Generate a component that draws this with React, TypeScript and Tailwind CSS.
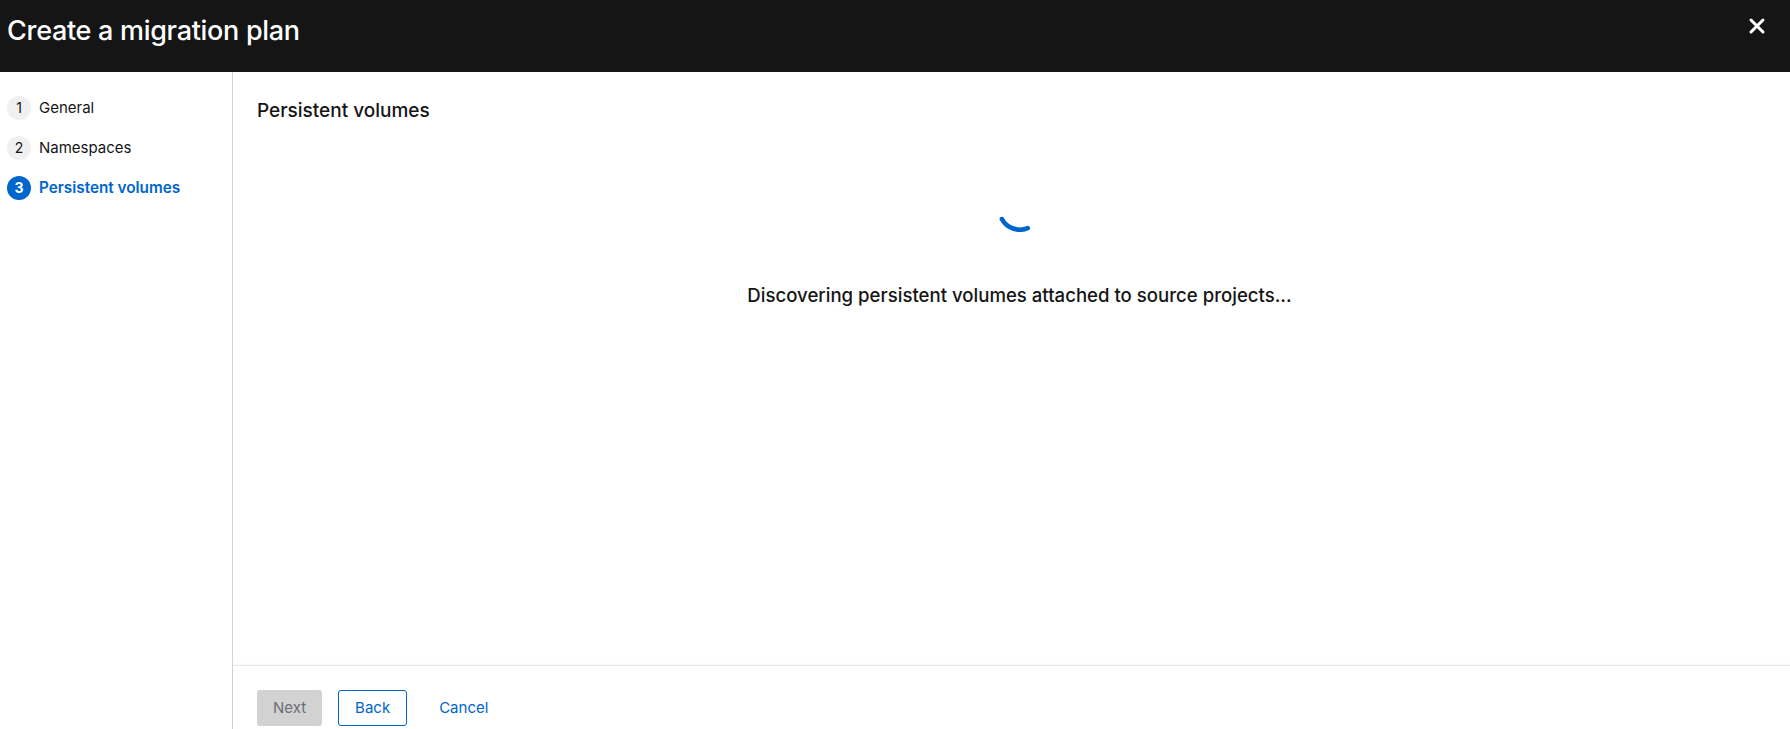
import { X } from 'lucide-react'

const steps = [
  { id: 1, name: 'General' },
  { id: 2, name: 'Namespaces' },
  { id: 3, name: 'Persistent volumes' },
]

const activeStep = 3

// Spinner captured mid-rotation: just a short arc along the bottom
function Spinner() {
  return (
    <svg width="46" height="46" viewBox="0 0 46 46" fill="none">
      <path
        d="M 30.75 42.19 A 20.7 20.7 0 0 1 4.9 33.04"
        stroke="#0066cc"
        strokeWidth="4.6"
        strokeLinecap="round"
      />
    </svg>
  )
}

function WizardNav() {
  return (
    <nav className="w-[233px] shrink-0 border-r border-[#d2d2d2] pt-4 pl-[7px]">
      <ol className="flex flex-col">
        {steps.map((step) => {
          const active = step.id === activeStep
          return (
            <li key={step.id} className="flex h-10 items-center gap-2">
              <span
                className={
                  active
                    ? 'flex h-6 w-6 items-center justify-center rounded-full bg-[#0066cc] text-sm font-bold text-white'
                    : 'flex h-6 w-6 items-center justify-center rounded-full bg-[#f0f0f0] text-sm text-[#151515]'
                }
              >
                {step.id}
              </span>
              <span
                className={
                  active
                    ? 'text-[15.3px] font-semibold text-[#0066cc]'
                    : 'text-[15px] text-[#151515]'
                }
              >
                {step.name}
              </span>
            </li>
          )
        })}
      </ol>
    </nav>
  )
}

export default function App() {
  return (
    <div className="flex h-screen flex-col overflow-hidden bg-white font-['Inter','Open_Sans',sans-serif] text-[#151515]">
      {/* Header */}
      <header className="flex h-[72px] shrink-0 items-start justify-between bg-[#151515] pl-[7px] pr-[21px]">
        <h1 className="pt-[11px] text-[27px] leading-[40px] font-medium tracking-[-0.3px] text-white">
          Create a migration plan
        </h1>
        <button className="mt-[14px] text-white">
          <X size={24} strokeWidth={3} />
        </button>
      </header>

      <div className="flex min-h-0 flex-1">
        <WizardNav />

        <div className="flex min-w-0 flex-1 flex-col">
          {/* Main body */}
          <main className="h-[593px] shrink-0 px-6 pt-6">
            <h2 className="text-[19px] leading-[30px] font-medium">Persistent volumes</h2>
            <div className="flex flex-col items-center pt-[60px] pl-4">
              <Spinner />
              <p className="mt-12 text-[18.6px] leading-[30px] font-medium">
                Discovering persistent volumes attached to source projects...
              </p>
            </div>
          </main>

          {/* Footer */}
          <footer className="flex shrink-0 items-center gap-4 border-t border-[#e8e8e8] px-6 pt-6 pb-6 shadow-[0_-1px_2px_rgba(0,0,0,0.04)]">
            <button
              disabled
              className="h-9 rounded-[3px] bg-[#d2d2d2] px-4 text-[15px] text-[#6a6e73]"
            >
              Next
            </button>
            <button className="h-9 rounded-[3px] border border-[#0066cc] px-4 text-[15px] text-[#0066cc]">
              Back
            </button>
            <button className="h-9 px-4 text-[15px] text-[#0066cc]">Cancel</button>
          </footer>
        </div>
      </div>
    </div>
  )
}
